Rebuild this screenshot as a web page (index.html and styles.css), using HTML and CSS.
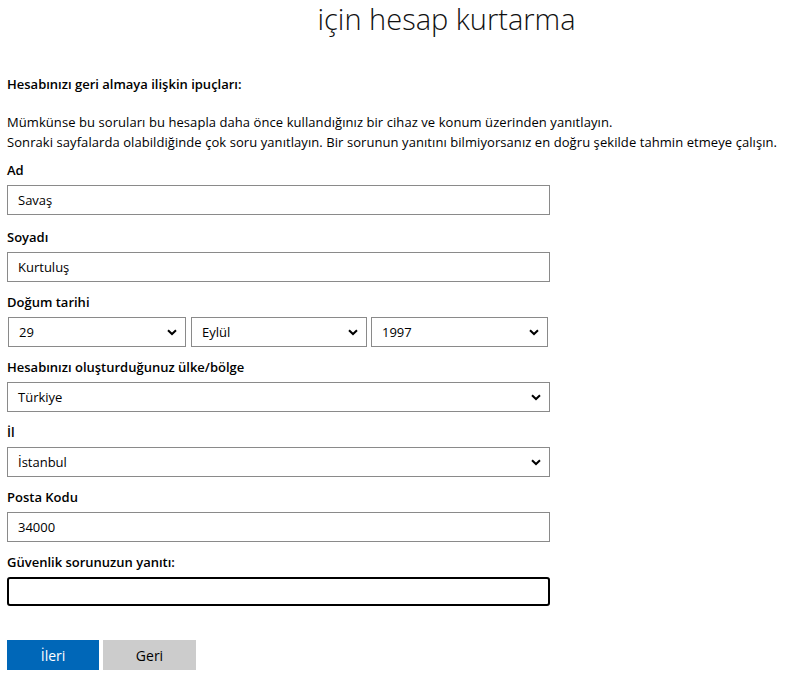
FILE: index.html
```html
<!DOCTYPE html>
<html lang="tr">
<head>
<meta charset="utf-8">
<link rel="stylesheet" href="styles.css">
</head>
<body>
<div class="page">
  <h1 class="title"><span class="hidden-mail">kullanici@example.com</span> için hesap kurtarma</h1>
  <div class="tips-head">Hesabınızı geri almaya ilişkin ipuçları:</div>
  <p class="tips">Mümkünse bu soruları bu hesapla daha önce kullandığınız bir cihaz ve konum üzerinden yanıtlayın.<br>Sonraki sayfalarda olabildiğinde çok soru yanıtlayın. Bir sorunun yanıtını bilmiyorsanız en doğru şekilde tahmin etmeye çalışın.</p>

  <div class="field first">
    <div class="label">Ad</div>
    <div class="box wide">Savaş</div>
  </div>
  <div class="field">
    <div class="label">Soyadı</div>
    <div class="box wide">Kurtuluş</div>
  </div>
  <div class="field">
    <div class="label">Doğum tarihi</div>
    <div class="date-row">
      <div class="box select d1">29<svg class="chev" viewBox="0 0 10 7"><path d="M1 1.2 L5 5 L9 1.2" /></svg></div>
      <div class="box select d2">Eylül<svg class="chev" viewBox="0 0 10 7"><path d="M1 1.2 L5 5 L9 1.2" /></svg></div>
      <div class="box select d3">1997<svg class="chev" viewBox="0 0 10 7"><path d="M1 1.2 L5 5 L9 1.2" /></svg></div>
    </div>
  </div>
  <div class="field">
    <div class="label">Hesabınızı oluşturduğunuz ülke/bölge</div>
    <div class="box wide select">Türkiye<svg class="chev" viewBox="0 0 10 7"><path d="M1 1.2 L5 5 L9 1.2" /></svg></div>
  </div>
  <div class="field">
    <div class="label">İl</div>
    <div class="box wide select">İstanbul<svg class="chev" viewBox="0 0 10 7"><path d="M1 1.2 L5 5 L9 1.2" /></svg></div>
  </div>
  <div class="field">
    <div class="label">Posta Kodu</div>
    <div class="box wide">34000</div>
  </div>
  <div class="field">
    <div class="label">Güvenlik sorunuzun yanıtı:</div>
    <div class="box wide focused"></div>
  </div>

  <div class="buttons">
    <div class="btn primary">İleri</div>
    <div class="btn secondary">Geri</div>
  </div>
</div>
</body>
</html>
```
FILE: styles.css
```css
html, body {
  margin: 0;
  padding: 0;
  background: #fff;
}
body {
  font-family: "Open Sans", "Noto Sans", sans-serif;
  font-size: 13px;
  color: #000;
}
.page {
  padding: 0 0 0 7px;
  width: 792px;
}
.title {
  margin: 0;
  padding: 0;
  height: 40px;
  font-size: 29px;
  font-weight: 300;
  line-height: 38px;
  color: #111;
}
.hidden-mail {
  color: #fff;
  display: inline-block;
  width: 303px;
  overflow: hidden;
  white-space: nowrap;
  vertical-align: top;
}
.tips-head {
  margin-top: 34px;
  line-height: 20px;
  font-weight: 600;
}
.tips {
  margin: 18px 0 8px 0;
  line-height: 20px;
  letter-spacing: 0.07px;
}
.field {
  margin-bottom: 10px;
}
.field.first {
  margin-bottom: 12px;
}
.label {
  line-height: 20px;
  font-weight: 600;
  margin-bottom: 5px;
}
.box {
  box-sizing: border-box;
  height: 30px;
  border: 1px solid #8a8a8a;
  padding: 0 10px;
  display: flex;
  align-items: center;
}
.wide {
  width: 543px;
}
.select {
  justify-content: space-between;
}
.chev {
  width: 10px;
  height: 7px;
  fill: none;
  stroke: #000;
  stroke-width: 2;
  margin-right: -2px;
}
.date-row {
  display: flex;
  padding-left: 1px;
}
.d1 {
  width: 178px;
  margin-right: 5px;
}
.d2 {
  width: 176px;
  margin-right: 4px;
}
.d3 {
  width: 177px;
}
.focused {
  border: 2px solid #000;
  border-radius: 3px;
  height: 29px;
}
.buttons {
  display: flex;
  gap: 4px;
  margin-top: 34px;
}
.btn {
  height: 30px;
  display: flex;
  align-items: center;
  justify-content: center;
  font-size: 14px;
}
.primary {
  width: 92px;
  background: #0067b8;
  color: #fff;
}
.secondary {
  width: 93px;
  background: #cccccc;
  color: #000;
}
```
